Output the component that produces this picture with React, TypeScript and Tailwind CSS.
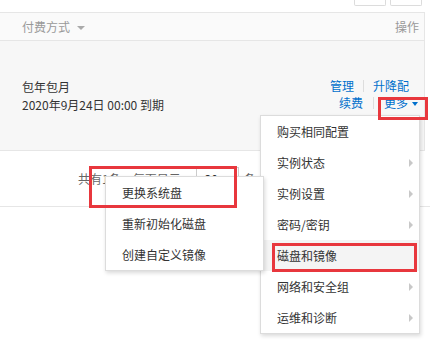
import React from "react";

const font = { fontFamily: '"Noto Sans CJK SC", "Liberation Sans", sans-serif' };

function RightArrow() {
  return <span className="w-0 h-0 border-y-[4px] border-y-transparent border-l-[4px] border-l-[#c8c8c8]" />;
}

function MenuItem({ label, arrow, active }: { label: string; arrow?: boolean; active?: boolean }) {
  return (
    <div className={`h-[31px] flex items-center justify-between pl-[16px] pr-[6px] text-[12px] text-[#333] ${active ? "bg-[#f4f4f4]" : ""}`}>
      <span>{label}</span>
      {arrow ? <RightArrow /> : null}
    </div>
  );
}

export default function App() {
  return (
    <div className="relative w-[430px] h-[348px] overflow-hidden bg-white" style={font}>
      {/* top buttons */}
      <div className="w-[425px] h-[12px] flex justify-end gap-[4px] pr-[3px]">
        <div className="w-[32px] h-[6px] border border-t-0 border-[#dcdcdc] rounded-b-[2px]" />
        <div className="w-[32px] h-[6px] border border-t-0 border-[#dcdcdc] rounded-b-[2px]" />
      </div>

      {/* table */}
      <div className="w-[425px] border-r border-[#e6e6e6]">
        <div className="h-[29px] border-y border-[#e6e6e6] bg-[#fafafa] flex items-center justify-between pl-[22px] pr-[5px] text-[12px] text-[#999]">
          <div className="flex items-center gap-[7px]">
            <span>付费方式</span>
            <span className="w-0 h-0 border-x-[4px] border-x-transparent border-t-[4px] border-t-[#aaa] mt-[2px]" />
          </div>
          <span>操作</span>
        </div>
        <div className="h-[110px] border-b border-[#e6e6e6] bg-[#f7f7f7] flex items-center justify-between pl-[22px] text-[12px] leading-[18px]">
          <div className="text-[#333]">
            <div>包年包月</div>
            <div>2020年9月24日 00:00 到期</div>
          </div>
          <div className="flex flex-col items-end text-[#0070cc] mt-[-2px]">
            <div className="flex items-center pr-[15px]">
              <span>管理</span>
              <span className="w-px h-[12px] bg-[#ddd] mx-[9px]" />
              <span>升降配</span>
            </div>
            <div className="flex items-center pr-[6px] mt-[-1px]">
              <span>续费</span>
              <span className="w-px h-[12px] bg-[#ddd] mx-[10px]" />
              <span>更多</span>
              <span className="w-0 h-0 border-x-[3px] border-x-transparent border-t-[4px] border-t-[#0070cc] ml-[4px] mt-[2px]" />
            </div>
          </div>
        </div>
      </div>

      {/* pagination */}
      <div className="h-[56px] border-b border-[#e6e6e6] flex items-center pl-[78px] text-[12px] text-[#666]">
        <span>共有1条，每页显示：</span>
        <div className="w-[43px] h-[24px] border border-[#ccc] bg-white flex items-center pl-[8px] text-[#333] ml-[3px]">20</div>
        <span className="ml-[5px]">条</span>
      </div>

      {/* main dropdown */}
      <div className="absolute left-[260px] top-[115px] w-[160px] border border-[#dcdcdc] bg-white shadow-[1px_2px_4px_rgba(0,0,0,0.15)]">
        <MenuItem label="购买相同配置" />
        <MenuItem label="实例状态" arrow />
        <MenuItem label="实例设置" arrow />
        <MenuItem label="密码/密钥" arrow />
        <MenuItem label="磁盘和镜像" active />
        <MenuItem label="网络和安全组" arrow />
        <MenuItem label="运维和诊断" arrow />
      </div>

      {/* submenu */}
      <div className="absolute left-[105px] top-[176px] w-[159px] border border-[#dcdcdc] bg-white shadow-[1px_2px_4px_rgba(0,0,0,0.15)]">
        <MenuItem label="更换系统盘" />
        <MenuItem label="重新初始化磁盘" />
        <MenuItem label="创建自定义镜像" />
      </div>

      {/* red highlight boxes */}
      <div className="absolute left-[378px] top-[97px] w-[50px] h-[23px] border-[3px] border-[#e8373d]" />
      <div className="absolute left-[89px] top-[166px] w-[148px] h-[42px] border-[3px] border-[#e8373d]" />
      <div className="absolute left-[272px] top-[243px] w-[145px] h-[29px] border-[3px] border-[#e8373d]" />
    </div>
  );
}
